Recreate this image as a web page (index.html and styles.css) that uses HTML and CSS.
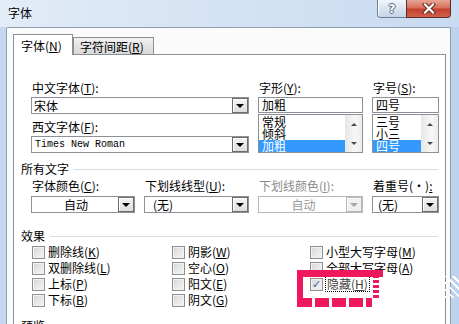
FILE: index.html
```html
<!DOCTYPE html>
<html>
<head>
    <title>字体</title>
    <meta charset="UTF-8">
    <link rel="stylesheet" href="styles.css">
</head>
<body>
<div class="window">
    <div class="titlebar">
        <span class="title">字体</span>
        <div class="caption">
            <div class="cap-btn help"><span>?</span></div>
            <div class="cap-btn close">
                <svg width="14" height="11" viewBox="0 0 14 11">
                    <path d="M3 1.5 L11 9.5 M11 1.5 L3 9.5" stroke="#6a2a20" stroke-width="4.2" stroke-linecap="square"/>
                    <path d="M3 1.5 L11 9.5 M11 1.5 L3 9.5" stroke="#fff" stroke-width="2.2" stroke-linecap="square"/>
                </svg>
            </div>
        </div>
    </div>

    <div class="client">
        <div class="tabs">
            <div class="tab active">字体(<u>N</u>)</div>
            <div class="tab">字符间距(<u>R</u>)</div>
        </div>

        <div class="panel">
            <div class="font-grid">
                <div class="col">
                    <div class="lbl">中文字体(<u>T</u>):</div>
                    <div class="combo"><span class="val">宋体</span><span class="drop"><i></i></span></div>
                    <div class="lbl lbl-gap">西文字体(<u>F</u>):</div>
                    <div class="combo"><span class="val mono">Times New Roman</span><span class="drop"><i></i></span></div>
                </div>
                <div class="col">
                    <div class="lbl">字形(<u>Y</u>):</div>
                    <div class="edit">加粗</div>
                    <div class="list">
                        <div class="items">
                            <div>常规</div>
                            <div>倾斜</div>
                            <div class="sel">加粗</div>
                        </div>
                        <div class="vscroll"><i class="up"></i><i class="down"></i></div>
                    </div>
                </div>
                <div class="col">
                    <div class="lbl">字号(<u>S</u>):</div>
                    <div class="edit">四号</div>
                    <div class="list">
                        <div class="items">
                            <div>三号</div>
                            <div>小三</div>
                            <div class="sel">四号</div>
                        </div>
                        <div class="vscroll"><i class="up"></i><i class="down"></i></div>
                    </div>
                </div>
            </div>

            <div class="group g-all">所有文字</div>
            <div class="attr-grid">
                <div class="lbl">字体颜色(<u>C</u>):</div>
                <div class="lbl">下划线线型(<u>U</u>):</div>
                <div class="lbl disabled">下划线颜色(<u>I</u>):</div>
                <div class="lbl">着重号(·)<u>:</u></div>
                <div class="combo"><span class="val center">自动</span><span class="drop"><i></i></span></div>
                <div class="combo"><span class="val pad-wide">(无)</span><span class="drop"><i></i></span></div>
                <div class="combo disabled"><span class="val center">自动</span><span class="drop"><i></i></span></div>
                <div class="combo"><span class="val pad-mid">(无)</span><span class="drop"><i></i></span></div>
            </div>

            <div class="group g-effects">效果</div>
            <div class="effects">
                <div class="chk"><span class="box"></span>删除线(<u>K</u>)</div>
                <div class="chk"><span class="box"></span>阴影(<u>W</u>)</div>
                <div class="chk"><span class="box"></span>小型大写字母(<u>M</u>)</div>

                <div class="chk"><span class="box"></span>双删除线(<u>L</u>)</div>
                <div class="chk"><span class="box"></span>空心(<u>O</u>)</div>
                <div class="chk"><span class="box"></span>全部大写字母(<u>A</u>)</div>

                <div class="chk"><span class="box"></span>上标(<u>P</u>)</div>
                <div class="chk"><span class="box"></span>阳文(<u>E</u>)</div>
                <div class="chk faded"><span class="box checked">&#10003;</span><span class="focus">隐藏(<u>H</u>)</span></div>

                <div class="chk"><span class="box"></span>下标(<u>B</u>)</div>
                <div class="chk"><span class="box"></span>阴文(<u>G</u>)</div>
                <div></div>
            </div>

            <div class="group g-preview">预览</div>
        </div>
    </div>

    <!-- watermark stamped over the dialog -->
    <div class="wm">
        <div class="wm-top"></div>
        <div class="wm-left"></div>
        <div class="wm-right"></div>
        <div class="wm-bottom"></div>
    </div>
    <div class="wm-speck"></div>
</div>
</body>
</html>
```

FILE: styles.css
```css
* { box-sizing: border-box; }
body { margin: 0; font-family: "Noto Sans CJK SC", "Noto Sans", sans-serif; font-size: 12px; color: #000; }
u { text-decoration: underline; text-underline-offset: 1px; }

.window {
    width: 459px;
    height: 324px;
    overflow: hidden;
    position: relative;
    background: linear-gradient(to right, #c4d7ef, #d3e2f4 50%, #bcd2ee);
}

/* title bar */
.titlebar {
    height: 27px;
    display: flex;
    justify-content: space-between;
    align-items: flex-start;
    background: linear-gradient(to right, #e3ecf7, #d6e4f4 40%, #c9dbf1);
}
.title { font-size: 12px; line-height: 14px; padding: 6px 0 0 8px; }
.caption { display: flex; margin-right: 8px; }
.cap-btn { height: 18px; display: flex; align-items: center; justify-content: center; }
.help {
    width: 29px;
    border: 1px solid #6f7f98;
    border-top: none;
    border-right: none;
    border-radius: 0 0 0 4px;
    background: linear-gradient(#f2f6fb, #dae4f0 50%, #c6d4e6);
    box-shadow: inset 1px 0 #fff;
}
.help span {
    font-family: "DejaVu Sans", sans-serif;
    font-weight: bold;
    font-size: 12px;
    color: #fff;
    text-shadow: 1px 0 #5d6a7c, -1px 0 #5d6a7c, 0 1px #5d6a7c, 0 -1px #5d6a7c;
}
.close {
    width: 45px;
    border: 1px solid #5e2b25;
    border-top: none;
    border-radius: 0 0 4px 0;
    background: linear-gradient(#e6a596, #d9705c 45%, #c2412c 55%, #d0624a);
}

/* client area */
.client {
    margin: 0 8px 0 6px;
    height: 297px;
    background: #fbfbfb;
    border: 1px solid #8d9db4;
    border-bottom: none;
    border-radius: 2px 2px 0 0;
    padding: 6px 4px 0 6px;
}
.tabs { display: flex; align-items: flex-end; height: 21px; margin-bottom: -1px; position: relative; z-index: 1; }
.tab {
    width: 81px;
    height: 17px;
    margin-bottom: 1px;
    padding: 2px 0 0 6px;
    line-height: 14px;
    border: 1px solid #8c8f96;
    border-bottom: none;
    background: linear-gradient(#f3f3f3, #e3e3e3 50%, #d9d9d9);
}
.tab.active {
    width: 60px;
    height: 21px;
    margin-bottom: 0;
    padding: 4px 0 0 7px;
    background: #fff;
}
.panel {
    height: 280px;
    background: #fff;
    border: 1px solid #8c8f96;
    padding: 26px 7px 0 17px;
}

.lbl { height: 16px; line-height: 14px; padding-left: 1px; white-space: nowrap; }
.lbl.disabled { color: #8a8a8a; }
.lbl-gap { margin-top: 6px; }

/* font / style / size */
.font-grid { display: grid; grid-template-columns: 218px 105px 67px; column-gap: 9px; }
.combo {
    height: 17px;
    border: 1px solid #8d9096;
    background: #fff;
    display: flex;
    align-items: center;
    padding: 0 0 0 2px;
}
.combo .val { flex: 1; line-height: 14px; white-space: nowrap; }
.combo .val.mono { font-family: "Liberation Mono", monospace; font-size: 10px; padding-left: 1px; }
.combo .val.center { text-align: center; }
.combo .val.pad-wide { padding-left: 6px; }
.combo .val.pad-mid { padding-left: 3px; }
.drop {
    width: 16px;
    height: 15px;
    border: 1px solid #6c6c6c;
    background: linear-gradient(#f4f4f4, #dedede);
    box-shadow: inset 1px 1px #fff;
    display: flex;
    align-items: center;
    justify-content: center;
}
.drop i { border-left: 4px solid transparent; border-right: 4px solid transparent; border-top: 4px solid #000; margin-top: 1px; }
.combo.disabled { border-color: #b5b8bd; color: #9a9a9a; }
.combo.disabled .drop { border-color: #b8b8b8; background: #f0f0f0; }
.combo.disabled .drop i { border-top-color: #a8a8a8; }

.edit { height: 16px; border: 1px solid #8d9096; line-height: 14px; padding-left: 3px; }
.list { height: 39px; margin-top: 1px; border: 1px solid #8d9096; display: flex; }
.items { flex: 1; padding-top: 1px; }
.items div { height: 12px; line-height: 12px; padding-left: 3px; }
.items .sel { background: #3399ff; color: #fff; }
.vscroll {
    width: 17px;
    background: linear-gradient(to right, #e6e6e6, #f7f7f7 60%, #ececec);
    display: flex;
    flex-direction: column;
    align-items: center;
    justify-content: space-between;
    padding: 8px 0 7px;
}
.vscroll .up { border-left: 3px solid transparent; border-right: 3px solid transparent; border-bottom: 3px solid #4a4a4a; }
.vscroll .down { border-left: 3px solid transparent; border-right: 3px solid transparent; border-top: 3px solid #4a4a4a; }

/* group headers */
.group { display: flex; align-items: center; height: 16px; line-height: 14px; margin-left: -10px; }
.group::after { content: ""; flex: 1; border-top: 1px solid #d6dfe6; margin-left: 5px; }
.g-all { margin-top: 8px; }
.g-effects { margin-top: 15px; }
.g-preview { margin-top: 10px; }

.attr-grid { display: grid; grid-template-columns: 104px 105px 105px 67px; column-gap: 9px; margin-top: 2px; }
.attr-grid .combo { margin-top: 1px; }

/* effects check boxes */
.effects { display: grid; grid-template-columns: 140px 138px 1fr; grid-auto-rows: 16px; }
.chk { display: flex; align-items: center; padding-left: 1px; white-space: nowrap; line-height: 14px; }
.chk.faded { color: #444; }
.box {
    width: 13px;
    height: 13px;
    margin-right: 3px;
    border: 1px solid #8e8f8f;
    background: linear-gradient(135deg, #d6d6d6, #f6f6f6);
    box-shadow: inset 0 0 0 1px #f2f2f2;
}
.box.checked {
    font-family: "DejaVu Sans", sans-serif;
    font-size: 11px;
    line-height: 11px;
    font-weight: bold;
    color: #3f5fa6;
    text-align: center;
}
.focus { outline: 1px dotted #000; outline-offset: 0; padding: 0 1px; }

/* watermark */
.wm { position: absolute; left: 297px; top: 270px; width: 86px; height: 37px; }
.wm-top { position: absolute; left: 0; top: 0; width: 86px; height: 7px; background: #f0185d; }
.wm-left { position: absolute; left: 0; top: 0; width: 6px; height: 37px; background: #f0185d; }
.wm-right {
    position: absolute; right: 4px; top: 0; width: 6px; height: 30px;
    background: repeating-linear-gradient(#f0185d 0 3px, rgba(255,255,255,0) 3px 5px);
}
.wm-bottom {
    position: absolute; left: 1px; top: 28px; width: 74px; height: 9px;
    background: repeating-linear-gradient(to right, #f0185d 0 14px, #fff 14px 17px);
}
.wm-speck {
    position: absolute; left: 445px; top: 276px; width: 14px; height: 22px;
    background: repeating-linear-gradient(45deg, #fff 0 2px, rgba(255,255,255,0) 2px 5px);
}
```
